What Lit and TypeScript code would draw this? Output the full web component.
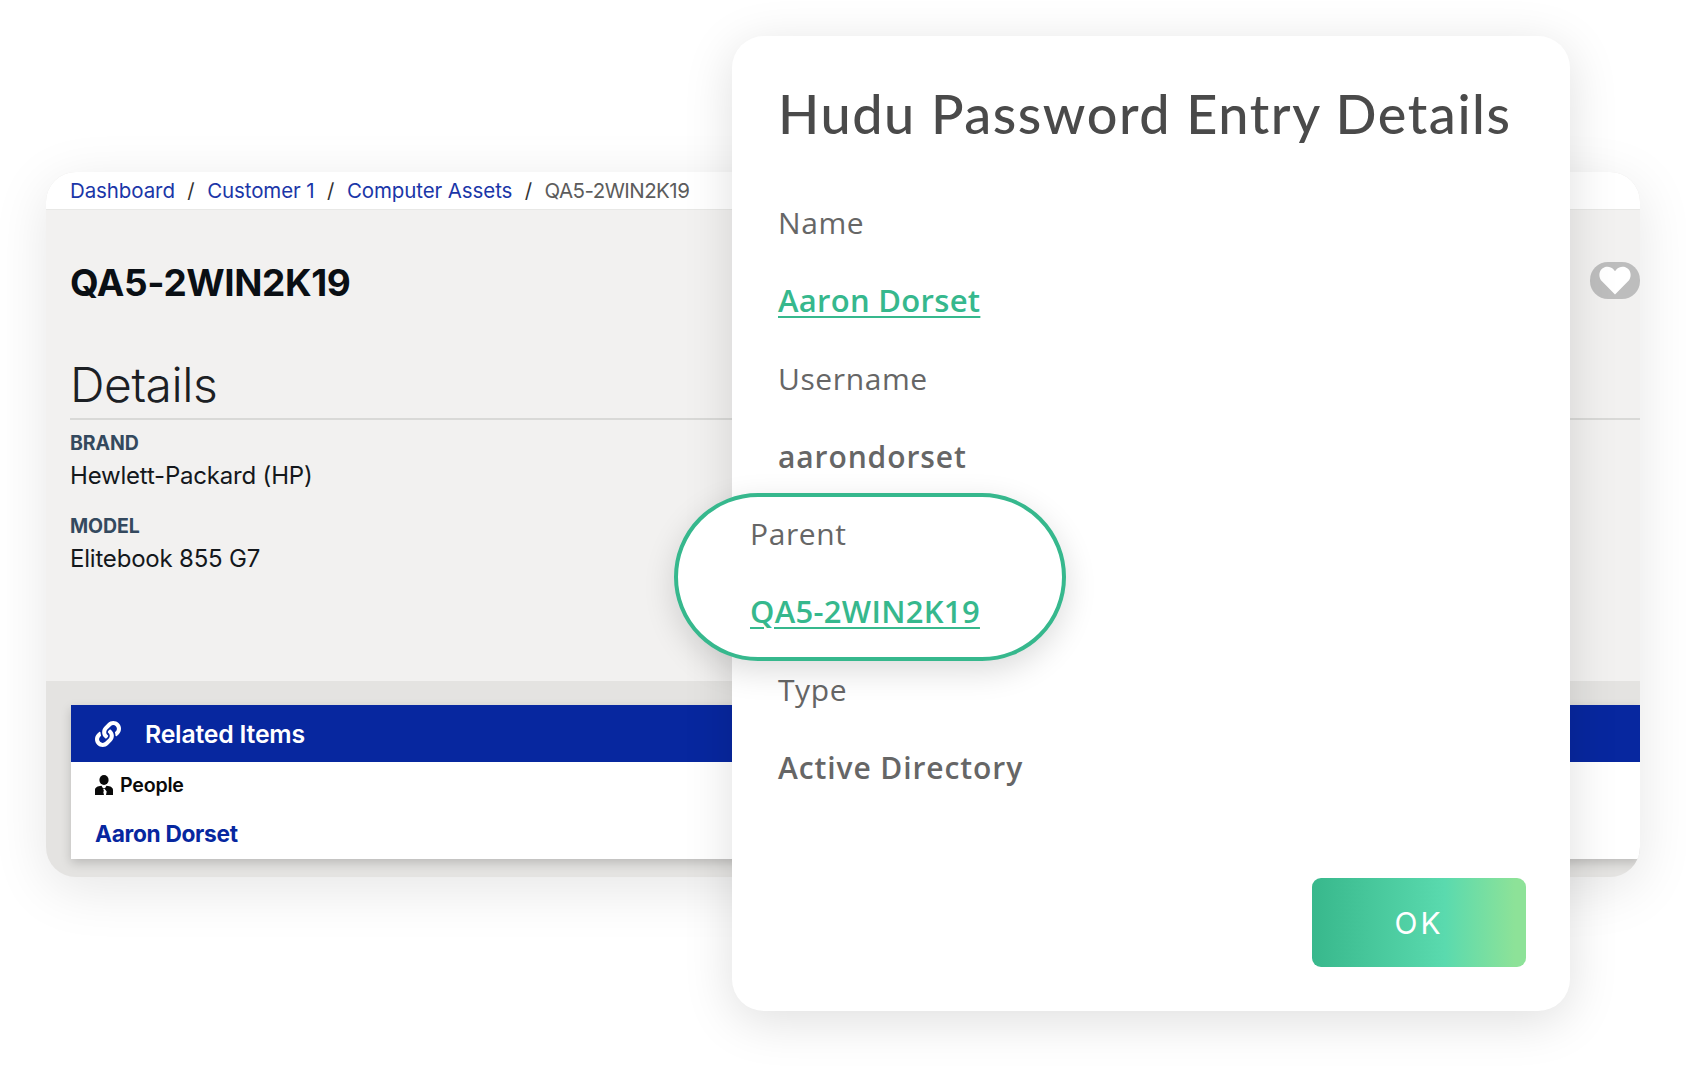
import { LitElement, html, css } from "lit";
import { customElement } from "lit/decorators.js";

@customElement("app-root")
export class AppRoot extends LitElement {
  static styles = css`
    :host { display: block; position: relative; width: 1686px; height: 1068px; background: #fff; overflow: hidden; font-family: Inter, "Liberation Sans", sans-serif; }
    a { text-decoration: none; color: inherit; }
    .back { position: absolute; left: 46px; top: 172px; width: 1594px; height: 705px; border-radius: 30px; display: flex; flex-direction: column; box-shadow: 0 12px 55px rgba(0,0,0,.1); overflow: hidden; background: #e4e3e1; }
    .crumbs { height: 38px; box-sizing: border-box; background: #fff; border-bottom: 1px solid #e8e8e6; padding: 0 0 0 24px; display: flex; align-items: center; gap: 12.5px; font-size: 20.5px; color: #5c5c5c; letter-spacing: -.1px; }
    .crumbs a { color: #1a36a8; }
    .crumbs .sep { color: #333; }
    .crumbs .current { letter-spacing: -.55px; }
    .main { height: 471px; box-sizing: border-box; background: #f2f1f0; padding: 0 0 0 24px; }
    .head { display: flex; justify-content: space-between; align-items: center; padding-top: 50px; height: 45px; }
    .head h1 { margin: 0; font-size: 37px; line-height: 45px; font-weight: 700; color: #0a0f14; letter-spacing: -.4px; }
    .heart { width: 50px; height: 37px; border-radius: 18px; background: #bdbdbd; display: flex; align-items: center; justify-content: center; margin-top: -4px; }
    .heart svg { width: 32px; height: 29px; display: block; }
    h2 { margin: 50px 0 0; font-size: 48px; line-height: 60px; font-weight: 300; color: #1c2024; letter-spacing: -.45px; height: 63px; border-bottom: 2px solid #d9d9d7; }
    .k { font-size: 19.5px; line-height: 22px; font-weight: 700; color: #34495e; margin-top: 12px; letter-spacing: -.1px; }
    .v { font-size: 24px; line-height: 30px; color: #14181c; margin-top: 7px; letter-spacing: -.2px; }
    .k.second { margin-top: 24px; }
    .related { margin: 24px 0 0 25px; background: #fff; box-shadow: 0 4px 10px rgba(0,0,0,.18); height: 154px; }
    .bar { height: 57px; box-sizing: border-box; background: #07279f; color: #fff; padding-left: 24px; display: flex; align-items: center; gap: 24px; font-size: 24.8px; font-weight: 600; letter-spacing: -.2px; }
    .bar svg { width: 26px; height: 26px; fill: #fff; display: block; }
    .people { display: flex; align-items: center; gap: 7px; padding: 11px 0 0 24px; font-size: 19.6px; line-height: 24px; font-weight: 600; color: #0a0a0a; letter-spacing: -.2px; }
    .people svg { width: 18px; height: 20px; display: block; }
    .person { display: block; margin: 24px 0 0 24px; font-size: 22.7px; line-height: 26px; font-weight: 700; color: #07279f; letter-spacing: -.3px; }

    .modal { position: absolute; left: 732px; top: 36px; width: 838px; height: 975px; box-sizing: border-box; background: #fff; border-radius: 32px; padding: 43px 44px 44px 46px; display: flex; flex-direction: column; box-shadow: 0 10px 50px rgba(0,0,0,.13); font-family: "Open Sans", "Liberation Sans", sans-serif; }
    .modal h3 { margin: 0; font-family: Lato, "Noto Sans", sans-serif; font-size: 54px; line-height: 70px; font-weight: 500; color: #4a4a4a; letter-spacing: 1.55px; white-space: nowrap; }
    .rows { margin-top: 34px; display: flex; flex-direction: column; }
    .row { height: 78px; display: flex; align-items: center; font-size: 30px; color: #666; letter-spacing: .6px; }
    .row.strong { font-weight: 600; letter-spacing: .9px; }
    .row a { color: #36b88d; font-size: 31px; font-weight: 600; text-decoration: underline; text-decoration-thickness: 2px; text-underline-offset: 4px; letter-spacing: .3px; }
    .pill { margin: -2px 0 -11px -104px; width: 392px; height: 168px; box-sizing: border-box; border: 4px solid #36b88d; border-radius: 84px; background: #fff; box-shadow: 0 10px 32px rgba(0,0,0,.14); padding: 0 0 0 72px; display: flex; flex-direction: column; position: relative; }
    .pill .row:first-child { margin-top: -3px; }
    .foot { margin-top: auto; display: flex; justify-content: flex-end; }
    .ok { width: 214px; height: 89px; margin-right: 0; border: 0; border-radius: 9px; background: linear-gradient(90deg, #38b88c 0%, #5adaae 62%, #8de298 95%); color: #fff; font-family: Inter, sans-serif; font-size: 30px; font-weight: 400; letter-spacing: 3px; }
  `;

  render() {
    return html`
      <section class="back">
        <nav class="crumbs">
          <a href="#">Dashboard</a><span class="sep">/</span>
          <a href="#">Customer 1</a><span class="sep">/</span>
          <a href="#">Computer Assets</a><span class="sep">/</span>
          <span class="current">QA5-2WIN2K19</span>
        </nav>
        <div class="main">
          <div class="head">
            <h1>QA5-2WIN2K19</h1>
            <div class="heart">
              <svg viewBox="0 0 32 29"><path fill="#fff" d="M16 28.5 3.2 15.6C-.6 11.7-.5 6 3 2.8c3.400-3 8.700-2.600 11.600.8L16 5.200l1.400-1.600c2.900-3.400 8.200-3.800 11.600-.8 3.500 3.200 3.600 8.900-.2 12.800z"/></svg>
            </div>
          </div>
          <h2>Details</h2>
          <div class="k">BRAND</div>
          <div class="v">Hewlett-Packard (HP)</div>
          <div class="k second">MODEL</div>
          <div class="v">Elitebook 855 G7</div>
        </div>
        <div class="related">
          <div class="bar">
            <svg viewBox="0 0 512 512"><path d="M326.612 185.391c59.747 59.809 58.927 155.698.36 214.59-.11.12-.24.25-.36.37l-67.2 67.2c-59.27 59.27-155.699 59.262-214.96 0-59.27-59.26-59.27-155.7 0-214.96l37.106-37.106c9.84-9.84 26.786-3.3 27.294 10.606.648 17.722 3.826 35.527 9.69 52.721 1.986 5.822.567 12.262-3.783 16.612l-13.087 13.087c-28.026 28.026-28.905 73.66-1.155 101.96 28.024 28.579 74.086 28.749 102.325.51l67.2-67.19c28.191-28.191 28.073-73.757 0-101.83-3.701-3.694-7.429-6.564-10.341-8.569a16.037 16.037 0 0 1-6.947-12.606c-.396-10.567 3.348-21.456 11.698-29.806l21.054-21.055c5.521-5.521 14.182-6.199 20.584-1.731a152.482 152.482 0 0 1 20.522 17.197zM467.547 44.449c-59.261-59.262-155.69-59.27-214.96 0l-67.2 67.2c-.12.12-.25.25-.36.37-58.566 58.892-59.387 154.781.36 214.59a152.454 152.454 0 0 0 20.521 17.196c6.402 4.468 15.064 3.789 20.584-1.731l21.054-21.055c8.35-8.35 12.094-19.239 11.698-29.806a16.037 16.037 0 0 0-6.947-12.606c-2.912-2.005-6.64-4.875-10.341-8.569-28.073-28.073-28.191-73.639 0-101.83l67.2-67.19c28.239-28.239 74.3-28.069 102.325.51 27.75 28.3 26.872 73.934-1.155 101.96l-13.087 13.087c-4.35 4.35-5.769 10.79-3.783 16.612 5.864 17.194 9.042 34.999 9.69 52.721.509 13.906 17.454 20.446 27.294 10.606l37.106-37.106c59.271-59.259 59.271-155.699.001-214.959z"/></svg>
            <span>Related Items</span>
          </div>
          <div class="people">
            <svg viewBox="0 0 18 20"><ellipse cx="9" cy="5" rx="4.600" ry="5" fill="#0a0a0a"/><path fill="#0a0a0a" d="M0 20v-5c0-2.500 2.500-3.800 6.500-4.200L8 13.200h2l1.500-2.400c4 .4 6.500 1.700 6.500 4.200v5h-7l.7-3.500L9.800 14H8.200l.9 2.500-.9.100.8 3.400z"/></svg>
            <span>People</span>
          </div>
          <a class="person" href="#">Aaron Dorset</a>
        </div>
      </section>

      <section class="modal">
        <h3>Hudu Password Entry Details</h3>
        <div class="rows">
          <div class="row">Name</div>
          <div class="row"><a href="#">Aaron Dorset</a></div>
          <div class="row">Username</div>
          <div class="row strong">aarondorset</div>
          <div class="pill">
            <div class="row">Parent</div>
            <div class="row"><a href="#">QA5-2WIN2K19</a></div>
          </div>
          <div class="row">Type</div>
          <div class="row strong">Active Directory</div>
        </div>
        <div class="foot"><button class="ok">OK</button></div>
      </section>
    `;
  }
}
